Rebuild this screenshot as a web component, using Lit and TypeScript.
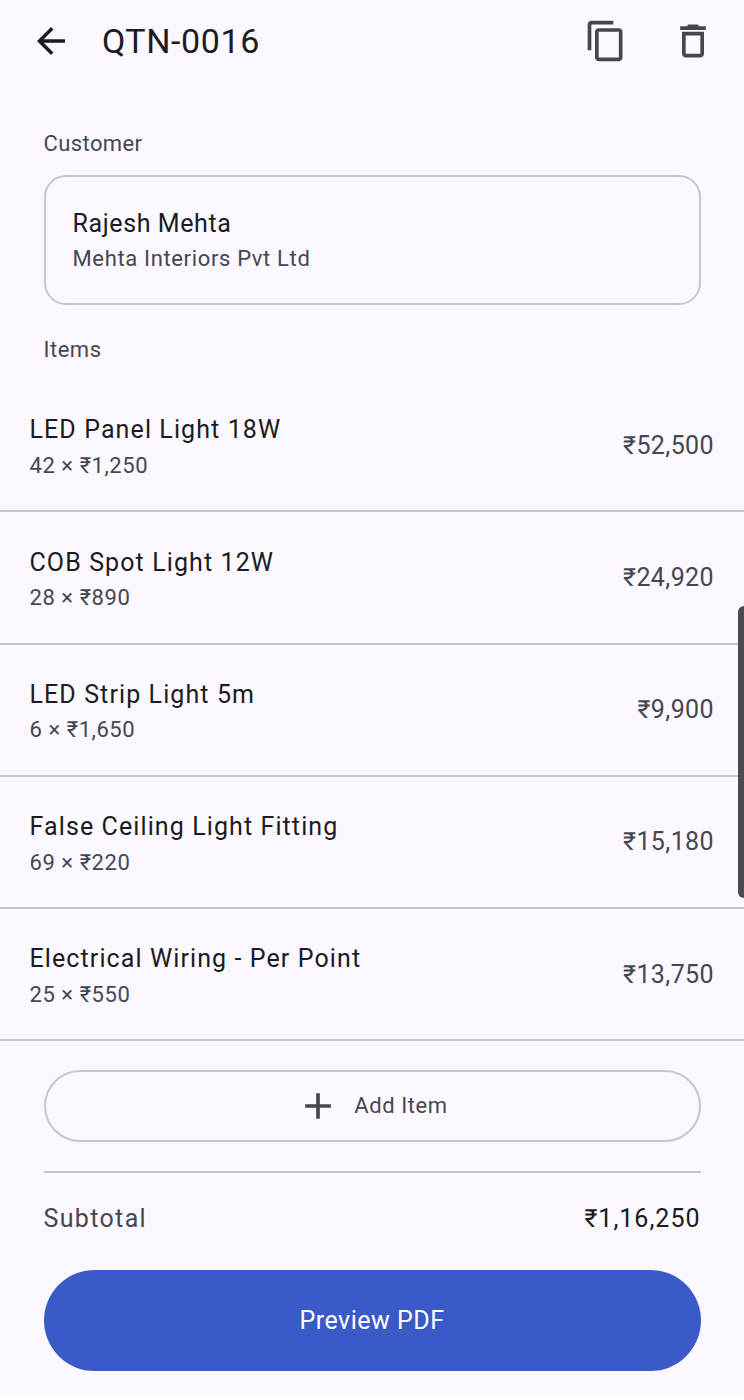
import { LitElement, html, css } from "lit";
import { customElement } from "lit/decorators.js";

const items = [
  { name: "LED Panel Light 18W", detail: "42 × ₹1,250", total: "₹52,500" },
  { name: "COB Spot Light 12W", detail: "28 × ₹890", total: "₹24,920" },
  { name: "LED Strip Light 5m", detail: "6 × ₹1,650", total: "₹9,900" },
  { name: "False Ceiling Light Fitting", detail: "69 × ₹220", total: "₹15,180" },
  { name: "Electrical Wiring - Per Point", detail: "25 × ₹550", total: "₹13,750" },
];

@customElement("app-root")
export class AppRoot extends LitElement {
  static styles = css`
    :host { display: block; background: #fff; height: 1400px; font-family: Roboto, "Noto Sans", sans-serif; color: #1b1b21; }
    .screen { position: relative; height: 1393px; background: #fbf8ff; overflow: hidden; box-sizing: border-box; }
    .top { height: 81px; display: flex; align-items: center; padding-left: 30px; box-sizing: border-box; }
    .top svg { display: block; }
    .title { font-size: 34px; line-height: 40px; margin-left: 30px; flex: 1; font-weight: 400; letter-spacing: 0.6px; }
    .copy { margin-right: 43px; }
    .trash { margin-right: 29px; }
    .pad { padding: 0 43.5px; }
    .label { font-size: 22px; line-height: 30px; color: #46464f; letter-spacing: 0.4px; }
    .custlabel { margin-top: 48px; }
    .card { margin-top: 16px; height: 129.5px; box-sizing: border-box; border: 2px solid #c7c5d0; border-radius: 22px; padding: 29px 27px 0; }
    .name { font-size: 25px; line-height: 36px; letter-spacing: 1.1px; }
    .card .name { letter-spacing: 0.6px; }
    .sub { font-size: 22px; line-height: 32px; color: #46464f; letter-spacing: 0.55px; margin-top: 1.5px; }
    .card .sub { letter-spacing: 0.65px; margin-top: 1px; }
    .text { padding-top: 4px; }
    .itemslabel { margin-top: 30.5px; letter-spacing: 0.5px; }
    .list { margin-top: 15px; }
    .row { height: 132.25px; box-sizing: border-box; border-bottom: 2px solid #c7c5d0; display: flex; align-items: center; justify-content: space-between; padding: 0 30px 0 29.5px; }
    .total { font-size: 25px; color: #46464f; letter-spacing: 0.4px; }
    .add { margin-top: 28.5px; height: 72px; box-sizing: border-box; border: 2px solid #c7c5d0; border-radius: 36px; display: flex; align-items: center; justify-content: center; gap: 14px; font-size: 22px; color: #46464f; letter-spacing: 0.6px; }
    .rule { margin-top: 29px; height: 2px; background: #c7c5d0; }
    .subtotal { margin-top: 29px; display: flex; justify-content: space-between; align-items: center; line-height: 34px; }
    .subtotal .k { font-size: 25px; color: #46464f; letter-spacing: 1.35px; }
    .subtotal .v { font-size: 25px; letter-spacing: 1px; }
    .cta { margin-top: 34px; height: 101px; border-radius: 51px; background: #3a5ac8; color: #fff; display: flex; align-items: center; justify-content: center; font-size: 25px; letter-spacing: 0.5px; }
    .scroll { position: absolute; right: 0; top: 606px; width: 6px; height: 292px; background: #4b4b4f; border-radius: 6px 0 0 6px; }
  `;

  render() {
    return html`
      <div class="screen">
        <div class="top">
          <svg width="42" height="42" viewBox="0 0 24 24" fill="#1b1b21"><path d="M20 11H7.83l5.59-5.59L12 4l-8 8 8 8 1.41-1.41L7.83 13H20v-2z"/></svg>
          <div class="title">QTN-0016</div>
          <svg class="copy" width="44" height="44" viewBox="0 0 24 24" fill="#46464f"><path d="M16 1H4c-1.1 0-2 .9-2 2v14h2V3h12V1zm3 4H8c-1.1 0-2 .9-2 2v14c0 1.1.9 2 2 2h11c1.1 0 2-.9 2-2V7c0-1.1-.9-2-2-2zm0 16H8V7h11v14z"/></svg>
          <svg class="trash" width="44" height="44" viewBox="0 0 24 24" fill="#46464f"><path d="M16 9v10H8V9h8m-1.5-6h-5l-1 1H5v2h14V4h-3.5l-1-1zM18 7H6v12c0 1.1.9 2 2 2h8c1.1 0 2-.9 2-2V7z"/></svg>
        </div>
        <div class="pad">
          <div class="label custlabel">Customer</div>
          <div class="card">
            <div class="name">Rajesh Mehta</div>
            <div class="sub">Mehta Interiors Pvt Ltd</div>
          </div>
          <div class="label itemslabel">Items</div>
        </div>
        <div class="list">
          ${items.map((i) => html`
            <div class="row">
              <div class="text">
                <div class="name">${i.name}</div>
                <div class="sub">${i.detail}</div>
              </div>
              <div class="total">${i.total}</div>
            </div>`)}
        </div>
        <div class="pad">
          <div class="add">
            <svg width="44" height="44" viewBox="0 0 24 24" fill="#46464f"><path d="M19 13h-6v6h-2v-6H5v-2h6V5h2v6h6v2z"/></svg>
            <span>Add Item</span>
          </div>
          <div class="rule"></div>
          <div class="subtotal"><span class="k">Subtotal</span><span class="v">₹1,16,250</span></div>
          <div class="cta">Preview PDF</div>
        </div>
        <div class="scroll"></div>
      </div>
    `;
  }
}
